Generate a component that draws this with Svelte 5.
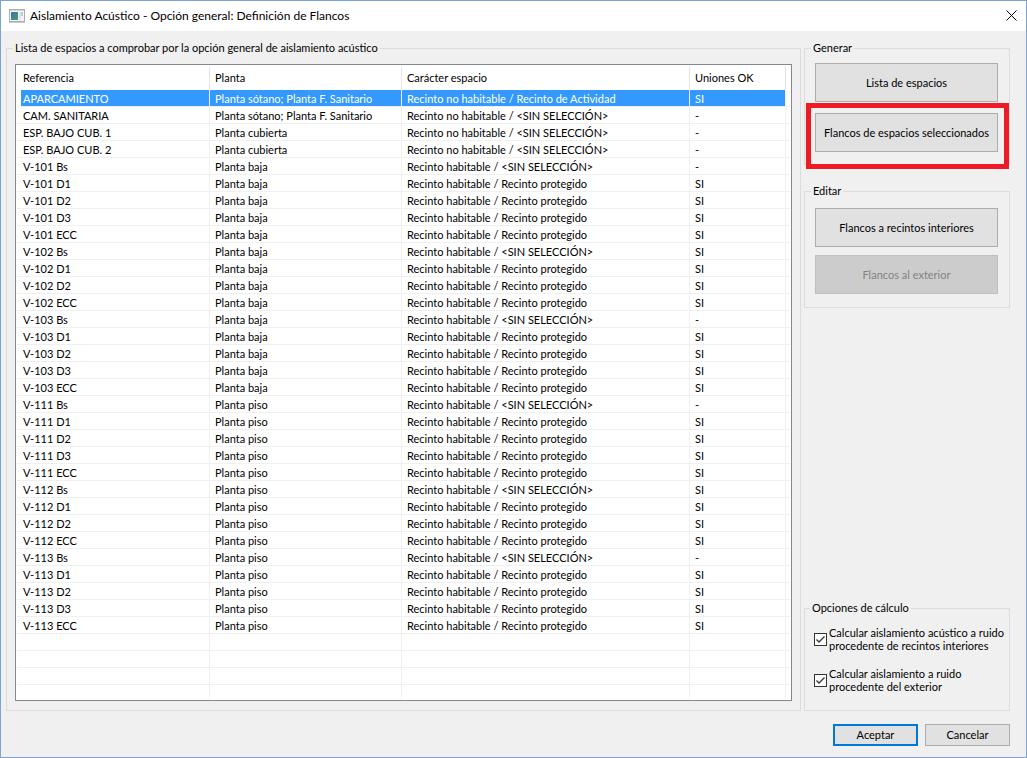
<!-- FlancosDialog.svelte -->
<script>
	const columns = ['Referencia', 'Planta', 'Carácter espacio', 'Uniones OK'];

	const SIN = 'Recinto habitable / <SIN SELECCIÓN>';
	const PROTEGIDO = 'Recinto habitable / Recinto protegido';
	const NO_HABITABLE = 'Recinto no habitable / <SIN SELECCIÓN>';

	/**
	 * @param {string} unit
	 * @param {string} floor
	 * @param {string[]} rooms
	 * @param {string} bathJoint
	 */
	function unitRows(unit, floor, rooms, bathJoint = '-') {
		return [
			[`${unit} Bs`, floor, SIN, bathJoint],
			...rooms.map((room) => [`${unit} ${room}`, floor, PROTEGIDO, 'SI'])
		];
	}

	const rows = [
		['APARCAMIENTO', 'Planta sótano; Planta F. Sanitario', 'Recinto no habitable / Recinto de Actividad', 'SI'],
		['CAM. SANITARIA', 'Planta sótano; Planta F. Sanitario', NO_HABITABLE, '-'],
		['ESP. BAJO CUB. 1', 'Planta cubierta', NO_HABITABLE, '-'],
		['ESP. BAJO CUB. 2', 'Planta cubierta', NO_HABITABLE, '-'],
		...unitRows('V-101', 'Planta baja', ['D1', 'D2', 'D3', 'ECC']),
		...unitRows('V-102', 'Planta baja', ['D1', 'D2', 'ECC'], 'SI'),
		...unitRows('V-103', 'Planta baja', ['D1', 'D2', 'D3', 'ECC']),
		...unitRows('V-111', 'Planta piso', ['D1', 'D2', 'D3', 'ECC']),
		...unitRows('V-112', 'Planta piso', ['D1', 'D2', 'ECC'], 'SI'),
		...unitRows('V-113', 'Planta piso', ['D1', 'D2', 'D3', 'ECC'])
	];

	// empty grid rows under the data, the last one takes the remaining height
	const blankRows = [0, 1, 2, 3];

	let selected = 0;
	let interiores = true;
	let exterior = true;
</script>

<div class="window">
	<header>
		<svg class="app-icon" width="16" height="14" viewBox="0 0 16 14" aria-hidden="true">
			<defs>
				<linearGradient id="pane" x1="0" y1="0" x2="1" y2="1">
					<stop offset="0" stop-color="#3c6eb4" />
					<stop offset="1" stop-color="#46a06c" />
				</linearGradient>
			</defs>
			<rect x="0.5" y="0.5" width="15" height="12" fill="#f4f6f6" stroke="#a9adb0" />
			<rect x="1" y="1" width="14" height="1" fill="#d4d8da" />
			<rect x="2" y="3" width="7" height="8" fill="url(#pane)" />
			<rect x="10" y="3" width="2" height="8" fill="#dfe6e8" />
			<rect x="12" y="3" width="2" height="4" fill="#b5d3c8" />
			<rect x="0" y="13" width="16" height="1" fill="#c9cbcc" />
		</svg>
		<h1>Aislamiento Acústico - Opción general: Definición de Flancos</h1>
		<button class="close" aria-label="Cerrar">
			<svg width="11" height="11" viewBox="0 0 11 11" aria-hidden="true">
				<path d="M0.5 0.5L10.5 10.5M10.5 0.5L0.5 10.5" stroke="#000" fill="none" />
			</svg>
		</button>
	</header>

	<main>
		<fieldset class="spaces">
			<legend>Lista de espacios a comprobar por la opción general de aislamiento acústico</legend>
			<div class="list">
				<table>
					<colgroup>
						<col class="c-ref" />
						<col class="c-floor" />
						<col class="c-type" />
						<col class="c-ok" />
						<col />
					</colgroup>
					<thead>
						<tr>
							{#each columns as column}
								<th>{column}</th>
							{/each}
							<td></td>
						</tr>
					</thead>
					<tbody>
						{#each rows as row, i}
							<tr class:selected={selected === i} on:click={() => (selected = i)}>
								{#each row as cell}
									<td>{cell}</td>
								{/each}
								<td></td>
							</tr>
						{/each}
						{#each blankRows as blank}
							<tr class="blank">
								<td></td><td></td><td></td><td></td><td></td>
							</tr>
						{/each}
					</tbody>
				</table>
			</div>
		</fieldset>

		<aside>
			<fieldset class="actions">
				<legend>Generar</legend>
				<button>Lista de espacios</button>
				<div class="marked">
					<button>Flancos de espacios seleccionados</button>
				</div>
			</fieldset>

			<fieldset class="actions edit">
				<legend>Editar</legend>
				<button>Flancos a recintos interiores</button>
				<button disabled>Flancos al exterior</button>
			</fieldset>

			<fieldset class="options">
				<legend>Opciones de cálculo</legend>
				<label>
					<input type="checkbox" bind:checked={interiores} />
					<span>Calcular aislamiento acústico a ruido<br />procedente de recintos interiores</span>
				</label>
				<label>
					<input type="checkbox" bind:checked={exterior} />
					<span>Calcular aislamiento a ruido<br />procedente del exterior</span>
				</label>
			</fieldset>
		</aside>
	</main>

	<footer>
		<button class="default">Aceptar</button>
		<button>Cancelar</button>
	</footer>
</div>

<style>
	:global(body) {
		background: #f0f0f0;
	}

	.window {
		box-sizing: border-box;
		display: flex;
		flex-direction: column;
		height: 100vh;
		border: 1px solid #7aa4d2;
		background: #f0f0f0;
		color: #000;
		font-family: Lato, 'Liberation Sans', sans-serif;
		font-size: 11px;
		line-height: 13px;
	}

	header {
		display: flex;
		align-items: center;
		height: 30px;
		padding: 0 9px 0 8px;
		background: #fff;
	}

	h1 {
		flex: 1;
		margin: 0 0 0 5px;
		font: 12px/16px Lato, 'Open Sans', sans-serif;
	}

	button {
		box-sizing: border-box;
		padding: 0 0 1px;
		border: 1px solid #adadad;
		background: #e1e1e1;
		color: #000;
		font: inherit;
	}

	button:disabled {
		border-color: #bfbfbf;
		background: #ccc;
		color: #838383;
	}

	.close {
		display: flex;
		border: none;
		background: none;
	}

	main {
		flex: 1;
		display: grid;
		grid-template-columns: minmax(0, 1fr) 206px;
		grid-template-rows: minmax(0, 1fr);
		gap: 3px;
		min-height: 0;
		padding: 10px 16px 0 5px;
	}

	fieldset {
		box-sizing: border-box;
		min-width: 0;
		margin: 0;
		padding: 8px 11px 12px 10px;
		border: 1px solid #dcdcdc;
	}

	legend {
		margin-left: -4px;
		padding: 0 2px;
		line-height: 14px;
	}

	.spaces {
		padding: 9px 8px 9px 8px;
	}

	.spaces legend {
		margin-left: -2px;
	}

	.list {
		box-sizing: border-box;
		height: 100%;
		padding: 1px;
		border: 1px solid #828790;
		background: #fff;
		overflow: auto;
	}

	table {
		width: 100%;
		height: 100%;
		table-layout: fixed;
		border-collapse: separate;
		border-spacing: 0;
	}

	.c-ref {
		width: 193px;
	}

	.c-floor {
		width: 192px;
	}

	.c-type {
		width: 288px;
	}

	.c-ok {
		width: 96px;
	}

	th,
	td {
		box-sizing: border-box;
		padding: 1px 5px 0;
		text-align: left;
		font-weight: normal;
		white-space: nowrap;
	}

	th:first-child,
	td:first-child {
		padding-left: 6px;
	}

	th {
		height: 24px;
		padding-top: 0;
		padding-bottom: 1px;
		border-right: 1px solid #e5e5e5;
	}

	tbody td {
		height: 17px;
		border-right: 1px solid #f0f0f0;
		border-bottom: 1px solid #f0f0f0;
	}

	tbody td:last-child {
		border-right: none;
	}

	.blank:last-child td {
		height: auto;
		border-bottom: none;
	}

	.selected td:not(:last-child) {
		background: #39f;
		color: #fff;
		background-clip: padding-box;
	}

	.selected td:first-child {
		background: linear-gradient(to right, #fff 4px, #39f 4px) padding-box;
	}

	aside {
		display: flex;
		flex-direction: column;
		gap: 19px;
	}

	.actions button {
		display: block;
		width: 100%;
		height: 39px;
	}

	.actions button + button {
		margin-top: 8px;
	}

	.edit {
		padding-top: 10px;
		padding-bottom: 13px;
	}

	.marked {
		position: relative;
		margin-top: 11px;
	}

	/* red frame that calls out the button */
	.marked::after {
		content: '';
		position: absolute;
		inset: -10px -11px -17px -9px;
		border: 5px solid #ed1c24;
		pointer-events: none;
	}

	.options {
		margin-top: auto;
		padding: 11px 2px 17px 9px;
	}

	label {
		display: flex;
		align-items: center;
		gap: 2px;
		white-space: nowrap;
	}

	label + label {
		margin-top: 15px;
	}

	input {
		appearance: none;
		flex: none;
		width: 13px;
		height: 13px;
		margin: 0;
		border: 1px solid #333;
		background: #fff;
	}

	input:checked {
		background: #fff url("data:image/svg+xml,%3Csvg xmlns='http://www.w3.org/2000/svg' viewBox='0 0 11 11'%3E%3Cpath d='M1.5 5.5L4 8L9.5 2.5' fill='none' stroke='%23333' stroke-width='1.3'/%3E%3C/svg%3E");
	}

	footer {
		display: flex;
		justify-content: flex-end;
		gap: 7px;
		padding: 13px 16px 11px;
	}

	footer button {
		width: 85px;
		height: 22px;
	}

	.default {
		border: 2px solid #0078d7;
	}
</style>
